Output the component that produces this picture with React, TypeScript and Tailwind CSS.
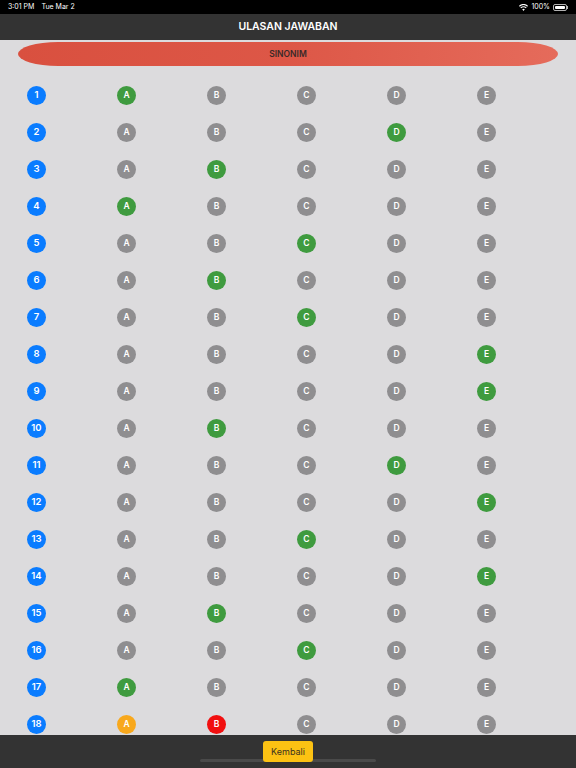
import React from "react";

type Mark = { correct: string; wrong?: string; picked?: string };

// jawaban per soal: correct = hijau, picked = oranye (jawaban user), wrong = merah
const answers: Mark[] = [
  { correct: "A" },
  { correct: "D" },
  { correct: "B" },
  { correct: "A" },
  { correct: "C" },
  { correct: "B" },
  { correct: "C" },
  { correct: "E" },
  { correct: "E" },
  { correct: "B" },
  { correct: "D" },
  { correct: "E" },
  { correct: "C" },
  { correct: "E" },
  { correct: "B" },
  { correct: "C" },
  { correct: "A" },
  { correct: "", picked: "A", wrong: "B" },
];

const options = ["A", "B", "C", "D", "E"];

const optionColor = (m: Mark, o: string) => {
  if (m.picked === o) return "bg-[#f8a81c]";
  if (m.wrong === o) return "bg-[#f10f0f]";
  if (m.correct === o) return "bg-[#3f9b3f]";
  return "bg-[#8f8e90]";
};

const Wifi = () => (
  <svg width="9" height="7" viewBox="0 0 24 18" fill="white">
    <path d="M12 18l3.5-4.2a5.6 5.6 0 0 0-7 0z" />
    <path d="M5.6 11.2a10 10 0 0 1 12.8 0l2-2.4a13.2 13.2 0 0 0-16.8 0z" />
    <path d="M1.9 6.7a15.8 15.8 0 0 1 20.2 0l1.9-2.3a18.8 18.8 0 0 0-24 0z" />
  </svg>
);

export default function App() {
  return (
    <div
      className="flex h-screen w-full flex-col overflow-hidden bg-[#dcdbdd]"
      style={{ fontFamily: "Inter, 'Liberation Sans', sans-serif" }}
    >
      {/* status bar */}
      <div className="flex h-[14px] shrink-0 items-center justify-between bg-black px-[8px] text-[7px] text-white">
        <div className="flex gap-[7px]">
          <span>3:01 PM</span>
          <span>Tue Mar 2</span>
        </div>
        <div className="flex items-center gap-[3px]">
          <Wifi />
          <span>100%</span>
          <div className="flex items-center">
            <div className="h-[7px] w-[14px] rounded-[2px] border border-white/70 p-[1px]">
              <div className="h-full w-full rounded-[1px] bg-white" />
            </div>
            <div className="h-[3px] w-[1px] bg-white/70" />
          </div>
        </div>
      </div>

      {/* header */}
      <div className="flex h-[26px] shrink-0 items-center justify-center bg-[#333333] text-[10.5px] font-semibold text-white">
        ULASAN JAWABAN
      </div>

      <div className="flex min-h-0 flex-1 flex-col">
        <div className="mx-[18px] mt-[2px] flex h-[24px] shrink-0 items-center justify-center rounded-[40px/12px] bg-gradient-to-r from-[#d9503f] via-[#dd5747] to-[#e56b5b] text-[8.5px] font-semibold text-[#3a2a28]">
          SINONIM
        </div>

        <div className="mt-[11px] flex min-h-0 flex-1 flex-col overflow-hidden">
          {answers.map((m, i) => (
            <div
              key={i}
              className="flex h-[37px] shrink-0 items-center gap-[71px] pl-[27px]"
            >
              <div className="flex h-[19px] w-[19px] shrink-0 items-center justify-center rounded-full bg-[#0a7cff] text-[9.5px] font-semibold text-white">
                {i + 1}
              </div>
              {options.map((o) => (
                <div
                  key={o}
                  className={`flex h-[19px] w-[19px] shrink-0 items-center justify-center rounded-full text-[8.5px] font-semibold text-white ${optionColor(m, o)}`}
                >
                  {o}
                </div>
              ))}
            </div>
          ))}
        </div>
      </div>

      {/* bottom bar */}
      <div className="relative flex h-[33px] shrink-0 justify-center bg-[#333333] pt-[6px]">
        <div className="absolute bottom-[6px] left-[200px] h-[3px] w-[176px] rounded-full bg-[#4a4a4a]" />
        <button className="relative h-[21px] rounded-[3px] bg-[#fcc213] px-[8px] text-[9px] text-[#3a3320]">
          Kembali
        </button>
      </div>
    </div>
  );
}
